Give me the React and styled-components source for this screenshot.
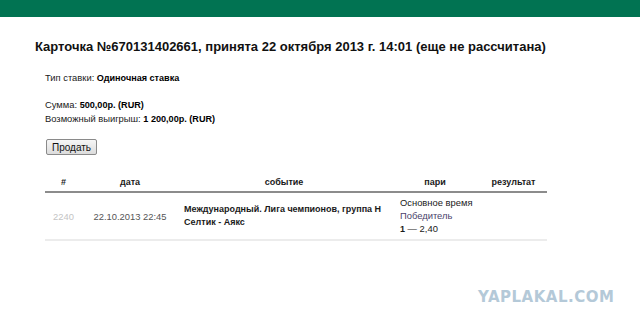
import React from "react";
import styled, { createGlobalStyle } from "styled-components";

const Global = createGlobalStyle`
  html, body { margin: 0; padding: 0; background: #fff; }
  body { font-family: "Liberation Sans", Arial, sans-serif; color: #111; }
`;

const Page = styled.div`
  width: 640px;
  height: 329px;
  position: relative;
  overflow: hidden;
`;

const TopBar = styled.div`
  height: 17px;
  background: #017352;
`;

const Content = styled.div`
  padding: 22px 0 0 35px;
`;

const Title = styled.h1`
  margin: 0;
  font-size: 13px;
  font-weight: bold;
  line-height: 16px;
  color: #111;
`;

const Details = styled.div`
  padding: 16px 0 0 10px;
  font-size: 9.4px;
  line-height: 13px;
  color: #1a1a1a;
  b { color: #000; font-size: 9.1px; }
`;

const Line = styled.div`
  margin-top: ${(p) => p.gap || 0}px;
`;

const SellButton = styled.button`
  display: block;
  margin: 13px 0 0 1px;
  height: 16px;
  padding: 0 5px;
  font-family: "Liberation Sans", Arial, sans-serif;
  font-size: 10px;
  color: #111;
  background: linear-gradient(#f6f6f6, #dcdcdc);
  border: 1px solid #8a8a8a;
  border-radius: 2px;
`;

const Table = styled.table`
  margin: 21px 0 0 10px;
  width: 502px;
  border-collapse: collapse;
  font-size: 9.4px;
  table-layout: fixed;
`;

const Th = styled.th`
  width: ${(p) => p.w}px;
  font-weight: bold;
  font-size: 9px;
  text-align: center;
  padding: 0 0 2px;
  line-height: 13px;
  border-bottom: 2px solid #8c8c8c;
  color: #1a1a1a;
`;

const Td = styled.td`
  height: 46px;
  vertical-align: middle;
  white-space: nowrap;
  text-align: ${(p) => p.align || "left"};
  color: ${(p) => p.color || "#1a1a1a"};
  font-weight: ${(p) => (p.bold ? "bold" : "normal")};
  font-size: ${(p) => (p.bold ? 9 : 9.4)}px;
  padding: ${(p) => p.pad || "0"};
  line-height: 13px;
  border-bottom: 2px solid #ececec;
  b { font-size: 9px; }
`;

const Purple = styled.div`
  color: #4a3f6b;
`;

const Watermark = styled.div`
  position: absolute;
  left: 478px;
  top: 288px;
  font-family: "DejaVu Sans", sans-serif;
  font-weight: 900;
  font-size: 15px;
  letter-spacing: 0.5px;
  color: #b4c9d8;
`;

export default function App() {
  return (
    <Page>
      <Global />
      <TopBar />
      <Content>
        <Title>Карточка №670131402661, принята 22 октября 2013 г. 14:01 (еще не рассчитана)</Title>
        <Details>
          <Line>Тип ставки: <b>Одиночная ставка</b></Line>
          <Line gap={13}>Сумма: <b>500,00р. (RUR)</b></Line>
          <Line>Возможный выигрыш: <b>1 200,00р. (RUR)</b></Line>
          <SellButton>Продать</SellButton>
        </Details>
        <Table>
          <thead>
            <tr>
              <Th w={37}>#</Th>
              <Th w={96}>дата</Th>
              <Th w={212}>событие</Th>
              <Th w={90}>пари</Th>
              <Th w={67}>результат</Th>
            </tr>
          </thead>
          <tbody>
            <tr>
              <Td align="center" color="#c4c4c4">2240</Td>
              <Td align="center" color="#555">22.10.2013 22:45</Td>
              <Td bold pad="0 0 0 6px">Международный. Лига чемпионов, группа H<br />Селтик - Аякс</Td>
              <Td pad="0 0 0 10px">
                <div>Основное время</div>
                <Purple>Победитель</Purple>
                <div><b>1</b> — 2,40</div>
              </Td>
              <Td />
            </tr>
          </tbody>
        </Table>
      </Content>
      <Watermark>YAPLAKAL.COM</Watermark>
    </Page>
  );
}
